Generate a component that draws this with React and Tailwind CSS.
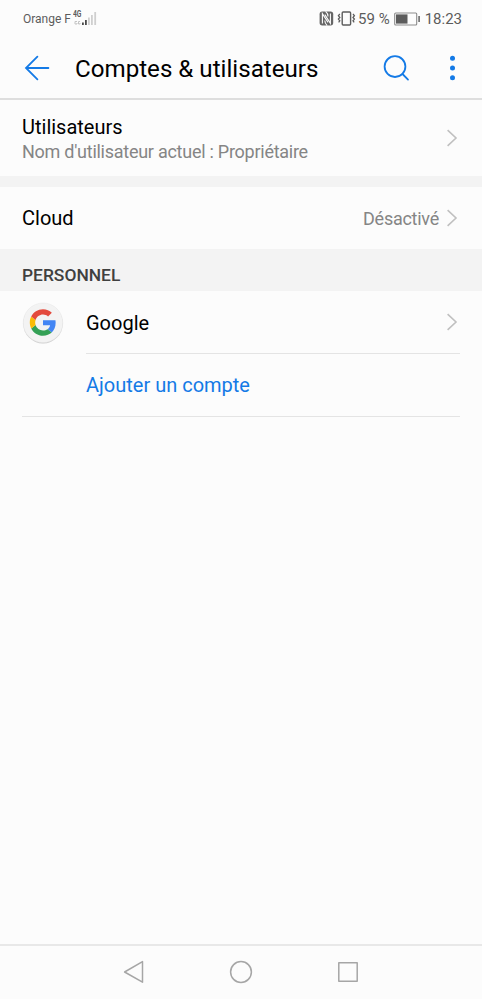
const ChevronRight = () => (
  <svg className="w-[12px] h-[18px] shrink-0" viewBox="0 0 12 18" fill="none" stroke="#c0c0c0" strokeWidth="1.6">
    <path d="M1.6 1.2 L10 9 L1.6 16.8" />
  </svg>
);

const SignalIcon = () => (
  <svg className="w-[24px] h-[18px]" viewBox="0 0 24 18">
    <g fill="none" stroke="#c4c4c4" strokeWidth="1">
      <path d="M4 12.5 H2 V15 H4 V14" />
      <path d="M7 12.5 H5.5 V15 H7 V14" />
    </g>
    <path fill="#4a4a4a" d="M9 13.5h1.8V16H9z M12 11h1.8v5H12z" />
    <path fill="#cfcfcf" d="M15 8.5h1.8V16H15z M18 6h1.8v10H18z M21.3 3h1.8v13h-1.8z" />
  </svg>
);

const NfcIcon = () => (
  <svg className="w-[15px] h-[15px]" viewBox="0 0 15 15">
    <rect x="0.6" y="0.6" width="13.6" height="13.8" rx="2.6" fill="#666666" />
    <g fill="none" stroke="#fcfcfc" strokeWidth="1.1">
      <path d="M3.4 12.6 V2.6 L9 11.4" />
      <path d="M5.8 3.6 L11.4 12.4 V2.4" />
      <path d="M6.6 0.4 Q9 2.6 9 5.4" />
      <path d="M5.8 9.6 Q5.8 12.4 8.2 14.6" />
    </g>
  </svg>
);

const VibrateIcon = () => (
  <svg className="w-[19px] h-[15px]" viewBox="0 0 19 15" fill="none" stroke="#5c5c5c">
    <rect x="5.2" y="1" width="8.4" height="13" rx="1" strokeWidth="1.4" />
    <path d="M2.8 3 L1.4 4.7 L2.8 6.4 L1.4 8.1 L2.8 9.8 L1.6 11.3" strokeWidth="1.3" />
    <path d="M16 3 L17.4 4.7 L16 6.4 L17.4 8.1 L16 9.8 L17.2 11.3" strokeWidth="1.3" />
  </svg>
);

const BatteryIcon = () => (
  <svg className="w-[27px] h-[14px]" viewBox="0 0 27 14">
    <rect x="0.7" y="1" width="22" height="12" rx="1" fill="none" stroke="#8b8b8b" strokeWidth="1.1" />
    <rect x="2" y="2.4" width="11.5" height="9.2" fill="#5c5c5c" />
    <rect x="24.3" y="4" width="1.6" height="6" fill="#6b6b6b" />
  </svg>
);

const GoogleLogo = () => (
  <svg className="w-[42px] h-[42px]" viewBox="0 0 42 42">
    <circle cx="21" cy="21.6" r="19.8" fill="#cccccc" />
    <circle cx="21" cy="20.8" r="19.8" fill="#f3f3f3" stroke="#e6e6e6" strokeWidth="0.5" />
    <g transform="translate(7.8 7.3) scale(0.55)">
      <path fill="#4285f4" d="M46.98 24.55c0-1.57-.15-3.09-.38-4.55H24v9.02h12.94c-.58 2.96-2.26 5.48-4.78 7.18l7.73 6c4.51-4.18 7.09-10.36 7.09-17.65z" />
      <path fill="#34a055" d="M24 48c6.48 0 11.93-2.13 15.89-5.81l-7.73-6c-2.15 1.45-4.92 2.3-8.16 2.3-6.26 0-11.57-4.22-13.47-9.91l-7.98 6.19C6.51 42.62 14.62 48 24 48z" />
      <path fill="#fbbc05" d="M10.53 28.59c-.48-1.45-.76-2.99-.76-4.59s.27-3.14.76-4.59l-7.98-6.19C.92 16.46 0 20.12 0 24c0 3.88.92 7.54 2.56 10.78l7.97-6.19z" />
      <path fill="#e34a3d" d="M24 9.5c3.54 0 6.71 1.22 9.21 3.6l6.85-6.85C35.9 2.38 30.47 0 24 0 14.62 0 6.51 5.38 2.56 13.22l7.98 6.19C12.43 13.72 17.74 9.5 24 9.5z" />
    </g>
  </svg>
);

function StatusBar() {
  return (
    <div className="h-[37px] pl-[23px] pr-[20px] flex items-center justify-between text-[#5c5c5c]">
      <div className="flex items-center">
        <span className="text-[12px] leading-4">Orange F</span>
        <div className="relative ml-[2px] mb-[2px]">
          <SignalIcon />
          <span className="absolute left-0 top-[1px] text-[9px] leading-[9px] font-bold origin-left scale-x-75">4G</span>
        </div>
      </div>
      <div className="flex items-center">
        <NfcIcon />
        <div className="ml-[3px] mr-[2px]">
          <VibrateIcon />
        </div>
        <span className="text-[15px] leading-5">59 %</span>
        <div className="ml-[4px] mr-[4px]">
          <BatteryIcon />
        </div>
        <span className="text-[15px] leading-5">18:23</span>
      </div>
    </div>
  );
}

function Header() {
  return (
    <header className="h-[63px] border-b-2 border-[#dedede] pl-[24px] pr-[20px] flex items-center">
      <svg className="w-[26px] h-[26px]" viewBox="0 0 26 26" fill="none" stroke="#147ae6" strokeWidth="1.8" strokeLinecap="round">
        <path d="M2 13 H24.4 M13.4 1.6 L2 13 L13.4 24.4" />
      </svg>
      <h1 className="ml-[25px] pt-[2px] text-[24.15px] leading-8 text-black whitespace-nowrap">Comptes &amp; utilisateurs</h1>
      <div className="ml-auto flex items-center">
        <svg className="w-[28px] h-[28px] mr-[34px]" viewBox="0 0 28 28" fill="none" stroke="#147ae6" strokeWidth="1.8" strokeLinecap="round">
          <circle cx="13" cy="12.6" r="10.4" />
          <path d="M20.5 20 L26 25.6" />
        </svg>
        <svg className="w-[18px] h-[26px]" viewBox="0 0 18 26" fill="#147ae6">
          <circle cx="8.5" cy="3.3" r="2.5" />
          <circle cx="8.5" cy="13" r="2.5" />
          <circle cx="8.5" cy="22.7" r="2.5" />
        </svg>
      </div>
    </header>
  );
}

function NavBar() {
  return (
    <nav className="h-[55px] pb-[2px] border-t-2 border-[#e8e8e8] flex items-center justify-center gap-[83px]">
      <svg className="w-[24px] h-[24px]" viewBox="0 0 24 24" fill="none" stroke="#a6a6a6" strokeWidth="1.5" strokeLinejoin="round">
        <path d="M20.5 1.6 V22.2 L2.6 12 Z" />
      </svg>
      <svg className="w-[24px] h-[24px]" viewBox="0 0 24 24" fill="none" stroke="#a6a6a6" strokeWidth="1.5">
        <circle cx="12" cy="12" r="10.4" />
      </svg>
      <svg className="w-[24px] h-[24px]" viewBox="0 0 24 24" fill="none" stroke="#a6a6a6" strokeWidth="1.5" strokeLinejoin="round">
        <rect x="2.8" y="2.8" width="18.4" height="18.4" />
      </svg>
    </nav>
  );
}

export default function App() {
  return (
    <div className="w-full h-[999px] bg-[#fcfcfc] font-['Roboto',sans-serif] flex flex-col overflow-hidden">
      <StatusBar />
      <Header />

      <main className="flex-1">
        <div className="h-[76px] pl-[22px] pr-[24px] flex items-center justify-between">
          <div className="pt-[2px]">
            <div className="text-[20px] leading-[26px] text-black">Utilisateurs</div>
            <div className="text-[18px] leading-[24px] tracking-[-0.26px] text-[#858585]">Nom d'utilisateur actuel : Propriétaire</div>
          </div>
          <ChevronRight />
        </div>

        <div className="h-[11px] bg-[#f3f3f3]" />

        <div className="h-[62px] pl-[22px] pr-[24px] flex items-center">
          <span className="flex-1 text-[20px] text-black">Cloud</span>
          <span className="mr-[7px] pt-px text-[18px] tracking-[-0.26px] text-[#858585]">Désactivé</span>
          <ChevronRight />
        </div>

        <div className="h-[42px] pt-[10px] pl-[22px] bg-[#f3f3f3] flex items-center">
          <h2 className="text-[17.4px] leading-6 font-medium text-[#404040]">PERSONNEL</h2>
        </div>

        <div className="mx-[22px] border-b border-[#e4e4e4]">
          <div className="flex items-center">
            <GoogleLogo />
            <div className="flex-1 ml-[22px] h-[63px] pr-[2px] border-b border-[#e4e4e4] flex items-center justify-between">
              <span className="pt-[2px] text-[20px] text-black">Google</span>
              <ChevronRight />
            </div>
          </div>
          <div className="pl-[64px] h-[62px] flex items-center text-[20px] text-[#147ae6]">Ajouter un compte</div>
        </div>
      </main>

      <NavBar />
    </div>
  );
}
